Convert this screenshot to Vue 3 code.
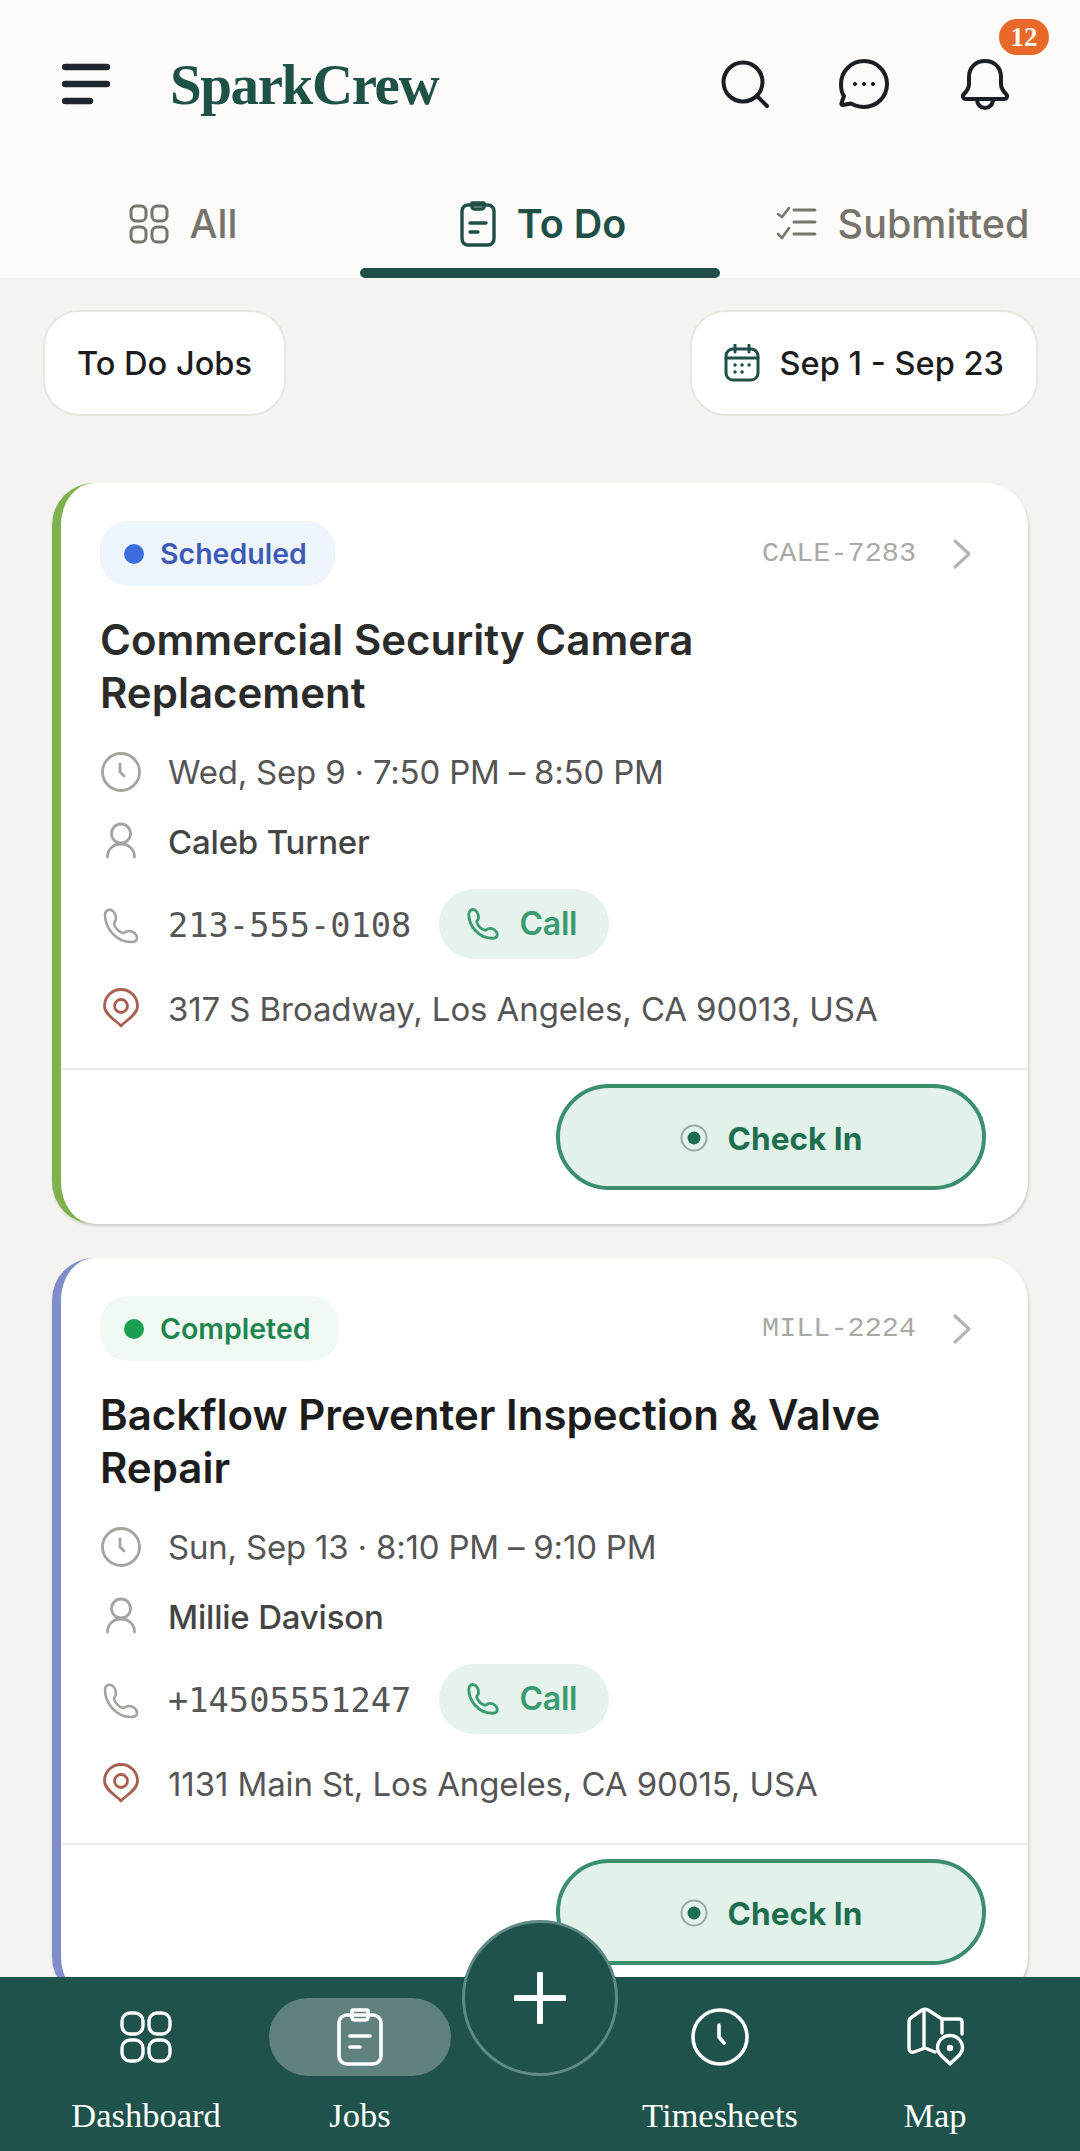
<script setup>
const tabs = [
  { label: "All", icon: "grid" },
  { label: "To Do", icon: "clip", active: true },
  { label: "Submitted", icon: "list" },
];

const jobs = [
  {
    status: "Scheduled",
    kind: "scheduled",
    code: "CALE-7283",
    title: "Commercial Security Camera Replacement",
    time: "Wed, Sep 9 · 7:50 PM – 8:50 PM",
    name: "Caleb Turner",
    phone: "213-555-0108",
    address: "317 S Broadway, Los Angeles, CA 90013, USA",
    accent: "#7fb24f",
  },
  {
    status: "Completed",
    kind: "completed",
    code: "MILL-2224",
    title: "Backflow Preventer Inspection & Valve Repair",
    time: "Sun, Sep 13 · 8:10 PM – 9:10 PM",
    name: "Millie Davison",
    phone: "+14505551247",
    address: "1131 Main St, Los Angeles, CA 90015, USA",
    accent: "#7f8dcb",
    dark: true,
  },
];

const phonePath =
  "M2 7C2 3 5 1 8 2c3 1 5 5 5 9 0 2-2 3-2 5 1 4 5 8 9 9 2 0 3-2 6-2 4 0 8 3 8 7 0 3-3 4-6 4C13 34 2 20 2 7z";
</script>

<template>
  <div class="app">
    <header class="top">
      <div class="bar">
        <svg class="burger" viewBox="0 0 48 42" width="48" height="42">
          <path d="M3 4h42M3 21h42M3 38h25" fill="none" stroke="#20262e" stroke-width="6.5" stroke-linecap="round" />
        </svg>
        <div class="logo">SparkCrew</div>
        <div class="actions">
          <svg class="search" viewBox="0 0 50 50" width="50" height="50" fill="none" stroke="#1b1f23" stroke-width="4" stroke-linecap="round">
            <circle cx="23" cy="23" r="19.5" />
            <path d="M37 37l10 10" />
          </svg>
          <svg viewBox="0 0 52 50" width="52" height="50" fill="none" stroke="#1b1f23" stroke-width="4" stroke-linecap="round" stroke-linejoin="round">
            <path d="M26 2a23 23 0 0 1 0 46c-5 0-9-1.5-13-3.5L5 46c-1.5 0-2-1-1.5-2L6 37C3.5 34 3 29 3 25A23 23 0 0 1 26 2z" />
            <circle cx="17" cy="25" r="1.6" fill="#1b1f23" stroke-width="1" />
            <circle cx="26" cy="25" r="1.6" fill="#1b1f23" stroke-width="1" />
            <circle cx="35" cy="25" r="1.6" fill="#1b1f23" stroke-width="1" />
          </svg>
          <div class="bell">
            <svg viewBox="0 0 50 52" width="50" height="52" fill="none" stroke="#1b1f23" stroke-width="4" stroke-linecap="round" stroke-linejoin="round">
              <path d="M25 3c-10 0-16 7-16 16v7c0 4-2 7-5 10-2 2-1 5 2 5h38c3 0 4-3 2-5-3-3-5-6-5-10v-7c0-9-6-16-16-16z" />
              <path d="M17 41c0 6 4 9 8 9s8-3 8-9" />
            </svg>
            <span class="badge">12</span>
          </div>
        </div>
      </div>
      <nav class="tabs">
        <div v-for="tab in tabs" :key="tab.label" class="tab" :class="{ active: tab.active }">
          <svg v-if="tab.icon === 'grid'" viewBox="0 0 40 40" width="40" height="40" fill="none" stroke="currentColor" stroke-width="3">
            <rect x="2" y="2" width="15" height="15" rx="5" />
            <rect x="23" y="2" width="15" height="15" rx="5" />
            <rect x="2" y="23" width="15" height="15" rx="5" />
            <rect x="23" y="23" width="15" height="15" rx="5" />
          </svg>
          <svg v-else-if="tab.icon === 'clip'" viewBox="0 0 36 46" width="36" height="46" fill="none" stroke="currentColor" stroke-width="3.4" stroke-linecap="round" stroke-linejoin="round">
            <rect x="2" y="4" width="32" height="40" rx="6" />
            <path d="M12 4V2h12v4c0 1-1 2-2 2h-8c-1 0-2-1-2-2z" />
            <path d="M10 22h16M10 31h8" />
          </svg>
          <svg v-else viewBox="0 0 40 34" width="40" height="34" fill="none" stroke="currentColor" stroke-width="3" stroke-linecap="round" stroke-linejoin="round">
            <path d="M1 7l4 3 7-9M1 27l4 4 7-10" stroke-width="2.6" />
            <path d="M17 3h21M17 15h21M17 27h21" />
          </svg>
          <span>{{ tab.label }}</span>
        </div>
      </nav>
    </header>

    <main class="content">
      <div class="filters">
        <button class="filter">To Do Jobs</button>
        <button class="filter date">
          <svg viewBox="0 0 36 38" width="36" height="38" fill="none" stroke="#1f4f46" stroke-width="3" stroke-linecap="round">
            <rect x="2" y="5" width="32" height="31" rx="7" />
            <path d="M2 14h32M11 1v7M25 1v7" />
            <path d="M11 21h.1M18 21h.1M25 21h.1M11 28h.1M18 28h.1" stroke-width="3.4" />
          </svg>
          Sep 1 - Sep 23
        </button>
      </div>

      <article v-for="job in jobs" :key="job.code" class="card" :style="{ borderLeftColor: job.accent }">
        <div class="card-body">
          <div class="card-top">
            <span class="status" :class="job.kind"><i class="dot"></i>{{ job.status }}</span>
            <span class="code">{{ job.code }}</span>
            <svg viewBox="0 0 20 32" width="20" height="32" fill="none" stroke="#b4b4b0" stroke-width="3.2" stroke-linecap="round" stroke-linejoin="round">
              <path d="M3 3l14 13L3 29" />
            </svg>
          </div>
          <h2 class="title" :class="{ dark: job.dark }">{{ job.title }}</h2>
          <div class="row time">
            <svg viewBox="0 0 42 42" width="42" height="42" fill="none" stroke="#a3a3a0" stroke-width="2.8" stroke-linecap="round" stroke-linejoin="round">
              <circle cx="21" cy="21" r="18.5" />
              <path d="M20 13v8l4 4" />
            </svg>
            <span>{{ job.time }}</span>
          </div>
          <div class="row person">
            <svg viewBox="0 0 42 42" width="42" height="42" fill="none" stroke="#a3a3a0" stroke-width="2.8" stroke-linecap="round">
              <circle cx="21" cy="12.5" r="9.5" />
              <path d="M7.5 36c0-7 5-13 13.5-13s13.5 6 13.5 13" />
            </svg>
            <span class="name">{{ job.name }}</span>
          </div>
          <div class="row phone">
            <svg viewBox="-3 -3 42 42" width="42" height="42" fill="none" stroke="#a3a3a0" stroke-width="2.6" stroke-linecap="round" stroke-linejoin="round">
              <path :d="phonePath" />
            </svg>
            <span class="num">{{ job.phone }}</span>
            <span class="call">
              <svg viewBox="0 0 36 36" width="32" height="32" fill="none" stroke="#3a9a70" stroke-width="3.2" stroke-linecap="round" stroke-linejoin="round">
                <path :d="phonePath" />
              </svg>
              Call
            </span>
          </div>
          <div class="row addr">
            <svg viewBox="0 0 42 42" width="42" height="42" fill="none" stroke="#a86050" stroke-width="2.8" stroke-linejoin="round">
              <path d="M21 38C17 33 4.5 27 4.5 18A16.500 16.500 0 0 1 37.5 18C37.5 27 25 33 21 38z" />
              <circle cx="21" cy="18" r="6.5" />
            </svg>
            <span>{{ job.address }}</span>
          </div>
        </div>
        <div class="card-foot">
          <button class="checkin">
            <svg viewBox="0 0 28 28" width="28" height="28">
              <circle cx="14" cy="14" r="12.5" fill="none" stroke="#9aa8a0" stroke-width="2" />
              <circle cx="14" cy="14" r="6.5" fill="#1e6f50" />
            </svg>
            <span>Check In</span>
          </button>
        </div>
      </article>
    </main>

    <footer class="nav">
      <div class="nav-item">
        <span class="nav-icon">
          <svg viewBox="0 0 52 52" width="52" height="52" fill="none" stroke="#fff" stroke-width="3.4">
            <rect x="2" y="2" width="21" height="21" rx="8" />
            <rect x="29" y="2" width="21" height="21" rx="8" />
            <rect x="2" y="29" width="21" height="21" rx="8" />
            <rect x="29" y="29" width="21" height="21" rx="8" />
          </svg>
        </span>
        <span>Dashboard</span>
      </div>
      <div class="nav-item">
        <span class="nav-icon on">
          <svg viewBox="0 0 46 58" width="46" height="58" fill="none" stroke="#fff" stroke-width="3.6" stroke-linecap="round" stroke-linejoin="round">
            <rect x="2" y="7" width="42" height="49" rx="8" />
            <path d="M15 7V3c0-1 1-1 1-1h14s1 0 1 1v6c0 2-1 3-3 3H18c-2 0-3-1-3-3z" />
            <path d="M13 28h20M13 39h10" />
          </svg>
        </span>
        <span>Jobs</span>
      </div>
      <div></div>
      <div class="nav-item">
        <span class="nav-icon">
          <svg viewBox="0 0 58 58" width="58" height="58" fill="none" stroke="#fff" stroke-width="3.6" stroke-linecap="round" stroke-linejoin="round">
            <circle cx="29" cy="29" r="27" />
            <path d="M28 17v12l5 6" />
          </svg>
        </span>
        <span>Timesheets</span>
      </div>
      <div class="nav-item">
        <span class="nav-icon">
          <svg viewBox="-2 -2 60 60" width="60" height="60" fill="none" stroke="#fff" stroke-width="3.4" stroke-linecap="round" stroke-linejoin="round">
            <path d="M28 43L18 39 7 43c-3 1-5-1-5-4V13c0-3 1-4 3-5l10-7c2-1 4-1 6 0l14 9h17c2 0 3 1 3 3v12" />
            <path d="M17 1v38M35 10v14" />
            <path d="M43 55C39 50 30.5 46 30.5 39A12.5 12.5 0 0 1 55.5 39C55.5 46 47 50 43 55z" />
            <circle cx="43" cy="39" r="1.5" fill="#fff" />
          </svg>
        </span>
        <span>Map</span>
      </div>
      <button class="fab">
        <svg viewBox="0 0 52 52" width="52" height="52">
          <path d="M26 2v48M2 26h48" stroke="#fff" stroke-width="6" stroke-linecap="round" />
        </svg>
      </button>
    </footer>
  </div>
</template>

<style scoped>
.app {
  width: 1080px;
  height: 2151px;
  display: flex;
  flex-direction: column;
  overflow: hidden;
  position: relative;
  background: #f4f3ef;
  font-family: "Inter", "Liberation Sans", sans-serif;
}

.top {
  background: #fdfcfa;
  height: 278px;
  flex: none;
}

.bar {
  height: 168px;
  display: flex;
  align-items: center;
  padding: 0 30px 0 62px;
}

.logo {
  margin-left: 60px;
  font-family: "Liberation Serif", serif;
  font-weight: 700;
  font-size: 57px;
  letter-spacing: -1.4px;
  color: #1f5246;
}

.actions {
  margin-left: auto;
  display: flex;
  align-items: center;
  gap: 70px;
}

.search {
  margin-right: -2px;
}

.bell {
  position: relative;
  width: 50px;
  height: 52px;
  margin-right: 40px;
}

.badge {
  position: absolute;
  left: 39px;
  top: -39px;
  width: 50px;
  height: 36px;
  border-radius: 18px;
  background: #e8692a;
  color: #fdf6ee;
  font-family: "Liberation Serif", serif;
  font-size: 27px;
  font-weight: 700;
  line-height: 36px;
  text-align: center;
}

.tabs {
  height: 110px;
  display: grid;
  grid-template-columns: 360px 360px 360px;
}

.tab {
  position: relative;
  display: flex;
  align-items: center;
  justify-content: center;
  gap: 21px;
  padding: 2px 0 0 6px;
  font-size: 39.5px;
  font-weight: 500;
  color: #77746d;
}

.tab.active {
  color: #1f4f46;
  font-weight: 600;
}

.tab.active::after {
  content: "";
  position: absolute;
  left: 0;
  right: 0;
  bottom: 0;
  height: 10px;
  border-radius: 5px;
  background: #1f4f46;
}

.content {
  flex: 1;
  min-height: 0;
  padding: 32px 52px 0;
}

.filters {
  display: flex;
  justify-content: space-between;
  margin: 0 -10px 67px -9px;
}

.filter {
  height: 106px;
  padding: 0 32px;
  border: 2px solid #e8e6e0;
  border-radius: 36px;
  background: #fff;
  font: 500 32.6px "Inter", sans-serif;
  color: #1c1c1c;
  display: flex;
  align-items: center;
  gap: 20px;
}

.card {
  background: #fff;
  border-left: 9px solid;
  border-radius: 42px;
  height: 741px;
  margin-bottom: 34px;
  box-shadow: 1px 2px 3px rgba(0, 0, 0, 0.16);
}

.card-body {
  height: 587px;
  padding: 38px 40px 0 39px;
  border-bottom: 2px solid #ecebe7;
  box-sizing: border-box;
}

.card-top {
  display: flex;
  align-items: center;
  height: 65px;
}

.status {
  display: inline-flex;
  align-items: center;
  height: 65px;
  padding: 0 28px 0 24px;
  border-radius: 28px;
  font-size: 28.5px;
  font-weight: 600;
}

.status.scheduled {
  background: #eff5fd;
  color: #3d5bb5;
}

.status.completed {
  background: #f0faf3;
  color: #1e8450;
}

.dot {
  width: 20px;
  height: 20px;
  border-radius: 50%;
  margin-right: 16px;
  background: #3b6fe0;
}

.completed .dot {
  background: #18a050;
}

.code {
  margin-left: auto;
  margin-right: 36px;
  font-family: "Liberation Mono", monospace;
  font-size: 28.5px;
  color: #a9a9a5;
}

.card-top svg {
  margin-right: 16px;
}

.title {
  margin: 27px 60px 23px 0;
  font-size: 42px;
  line-height: 53px;
  font-weight: 600;
  color: #2b2b2b;
}

.title.dark {
  color: #1c1c1c;
}

.row {
  display: flex;
  align-items: center;
  gap: 26px;
  font-size: 33px;
  letter-spacing: -0.2px;
  color: #555;
}

.time {
  height: 60px;
}

.person {
  height: 80px;
}

.phone {
  height: 87px;
}

.addr {
  height: 79px;
  letter-spacing: -0.1px;
}

.name {
  font-weight: 500;
  color: #444;
}

.num {
  font-family: "DejaVu Sans Mono", monospace;
  font-size: 33.7px;
  letter-spacing: 0;
}

.call {
  display: inline-flex;
  align-items: center;
  gap: 20px;
  height: 70px;
  padding: 0 32px 0 28px;
  margin: -4px 0 0 2px;
  border-radius: 35px;
  background: #e6f3ec;
  color: #3a9a70;
  font-size: 32px;
  font-weight: 600;
}

.card-foot {
  display: flex;
  justify-content: flex-end;
  padding: 14px 42px 0 0;
}

.checkin {
  width: 430px;
  height: 106px;
  border: 4px solid #3b8f6f;
  border-radius: 53px;
  background: #e2f2e8;
  color: #1e6f50;
  font: 700 31.6px "Inter", sans-serif;
  display: flex;
  align-items: center;
  justify-content: center;
  gap: 20px;
  padding-top: 3px;
}

.nav {
  flex: none;
  position: relative;
  height: 174px;
  background: #1f524b;
  display: grid;
  grid-template-columns: 216px 212px 148px 212px 218px;
  padding-left: 38px;
  font-family: "Liberation Serif", serif;
  font-size: 34.5px;
  color: #fff;
}

.nav-item {
  display: flex;
  flex-direction: column;
  align-items: center;
  padding-top: 21px;
  gap: 20px;
}

.nav-icon {
  width: 182px;
  height: 78px;
  border-radius: 39px;
  display: flex;
  align-items: center;
  justify-content: center;
}

.nav-icon.on {
  background: #5f827e;
}

.fab {
  position: absolute;
  left: 462px;
  top: -57px;
  width: 156px;
  height: 156px;
  border-radius: 50%;
  border: 3px solid #5f8a85;
  background: #1f524b;
  display: flex;
  align-items: center;
  justify-content: center;
}
</style>
